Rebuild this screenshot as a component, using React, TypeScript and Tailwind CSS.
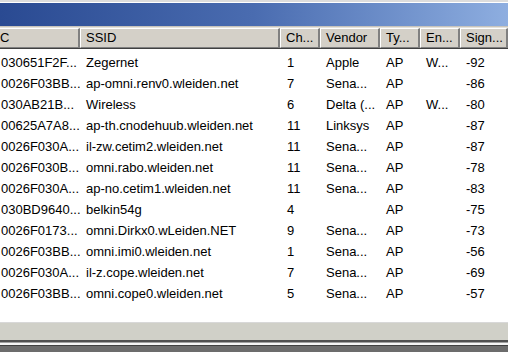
import React from 'react';

type Net = {
    mac: string;
    ssid: string;
    ch: string;
    vendor: string;
    type: string;
    enc: string;
    signal: string;
};

const networks: Net[] = [
    { mac: '030651F2F...', ssid: 'Zegernet', ch: '1', vendor: 'Apple', type: 'AP', enc: 'W...', signal: '-92' },
    { mac: '0026F03BB...', ssid: 'ap-omni.renv0.wleiden.net', ch: '7', vendor: 'Sena...', type: 'AP', enc: '', signal: '-86' },
    { mac: '030AB21B...', ssid: 'Wireless', ch: '6', vendor: 'Delta (...', type: 'AP', enc: 'W...', signal: '-80' },
    { mac: '00625A7A8...', ssid: 'ap-th.cnodehuub.wleiden.net', ch: '11', vendor: 'Linksys', type: 'AP', enc: '', signal: '-87' },
    { mac: '0026F030A...', ssid: 'il-zw.cetim2.wleiden.net', ch: '11', vendor: 'Sena...', type: 'AP', enc: '', signal: '-87' },
    { mac: '0026F030B...', ssid: 'omni.rabo.wleiden.net', ch: '11', vendor: 'Sena...', type: 'AP', enc: '', signal: '-78' },
    { mac: '0026F030A...', ssid: 'ap-no.cetim1.wleiden.net', ch: '11', vendor: 'Sena...', type: 'AP', enc: '', signal: '-83' },
    { mac: '030BD9640...', ssid: 'belkin54g', ch: '4', vendor: '', type: 'AP', enc: '', signal: '-75' },
    { mac: '0026F0173...', ssid: 'omni.Dirkx0.wLeiden.NET', ch: '9', vendor: 'Sena...', type: 'AP', enc: '', signal: '-73' },
    { mac: '0026F03BB...', ssid: 'omni.imi0.wleiden.net', ch: '1', vendor: 'Sena...', type: 'AP', enc: '', signal: '-56' },
    { mac: '0026F030A...', ssid: 'il-z.cope.wleiden.net', ch: '7', vendor: 'Sena...', type: 'AP', enc: '', signal: '-69' },
    { mac: '0026F03BB...', ssid: 'omni.cope0.wleiden.net', ch: '5', vendor: 'Sena...', type: 'AP', enc: '', signal: '-57' },
];

const headCell = 'h-full flex items-center overflow-hidden whitespace-nowrap border-t border-l border-t-white border-l-white border-r-2 border-b border-r-[#808080] border-b-[#808080] bg-[#d4d0c8]';

const App = () => {
    return (
        <div
            className="w-[508px] h-[352px] overflow-hidden flex flex-col bg-white text-[13px] text-black"
            style={{ fontFamily: '"Liberation Sans", Arial, sans-serif' }}
        >
            {/* window chrome top */}
            <div className="h-[3px] bg-[#dcdcdc] border-b border-white" />
            <div className="h-[23px] bg-gradient-to-r from-[#2a4a92] via-[#4a6cb0] to-[#8eaee0]" />
            <div className="h-[2px] bg-[#e4e2dc] border-t border-[#c8c4bc]" />

            {/* list header (MAC column scrolled off, only its last letter shows) */}
            <div className="h-[21px] flex bg-[#d4d0c8] border-b border-[#404040]">
                <div className={`${headCell} w-[80px] shrink-0 border-l-0`}>
                    <span>C</span>
                </div>
                <div className={`${headCell} w-[200px] shrink-0 pl-[5px]`}>SSID</div>
                <div className={`${headCell} w-[40px] shrink-0 pl-[5px]`}>Ch...</div>
                <div className={`${headCell} w-[60px] shrink-0 pl-[5px]`}>Vendor</div>
                <div className={`${headCell} w-[40px] shrink-0 pl-[5px]`}>Ty...</div>
                <div className={`${headCell} w-[40px] shrink-0 pl-[5px]`}>En...</div>
                <div className={`${headCell} flex-1 pl-[5px]`}>Sign...</div>
            </div>

            {/* rows */}
            <div className="flex-1 flex flex-col pt-[3px]">
                {networks.map((n, i) => (
                    <div key={i} className="h-[21px] shrink-0 flex items-center whitespace-nowrap">
                        <div className="w-[80px] shrink-0 pl-[1px] overflow-hidden">{n.mac}</div>
                        <div className="w-[200px] shrink-0 pl-[6px] overflow-hidden">{n.ssid}</div>
                        <div className="w-[40px] shrink-0 pl-[7px]">{n.ch}</div>
                        <div className="w-[60px] shrink-0 pl-[6px]">{n.vendor}</div>
                        <div className="w-[40px] shrink-0 pl-[6px]">{n.type}</div>
                        <div className="w-[40px] shrink-0 pl-[6px]">{n.enc}</div>
                        <div className="flex-1 pl-[6px]">{n.signal}</div>
                    </div>
                ))}
            </div>

            {/* bottom chrome */}
            <div className="h-[1px] bg-[#d8d8d8]" />
            <div className="h-[17px] bg-[#d0d0c8]" />
            <div className="h-[2px] bg-[#505050]" />
            <div className="h-[1px] bg-[#a0a0a0]" />
            <div className="h-[2px] bg-[#f4f4f4]" />
            <div className="h-[1px] bg-[#404040]" />
            <div className="h-[6px] bg-[#6c6c6c]" />
        </div>
    );
};

export default App;
